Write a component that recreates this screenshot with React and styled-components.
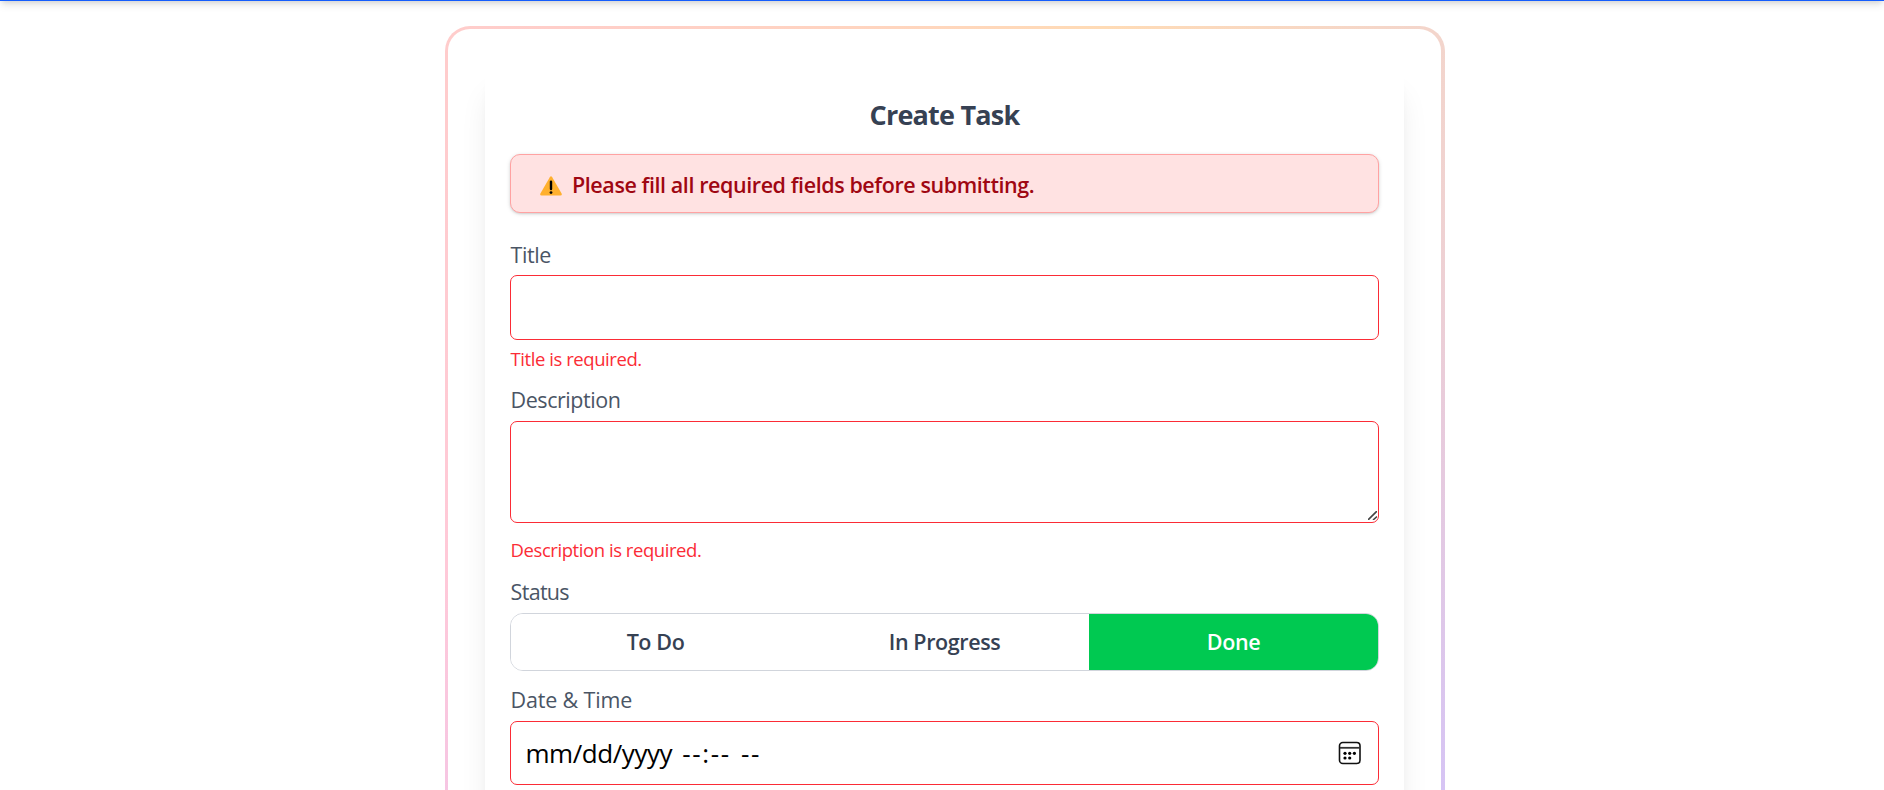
import React from "react";
import styled, { createGlobalStyle } from "styled-components";

const Global = createGlobalStyle`
  * { box-sizing: border-box; }
  body { margin: 0; background: #fff; overflow: hidden; font-family: "Open Sans", "Noto Sans", sans-serif; }
`;

const Page = styled.div`
  height: 790px;
  overflow: hidden;
`;
const TopBar = styled.div`
  height: 80px;
  margin-top: -79px;
  background: #155dfc;
  box-shadow: 0 5px 8px -1px rgba(0, 0, 0, 0.1), 0 3px 5px -2px rgba(0, 0, 0, 0.1);
`;
const Frame = styled.div`
  width: 1000px;
  height: 1160px;
  margin: 25px 0 0 445px;
  padding: 3px 4px 3px 3px;
  border-radius: 25px;
  background: conic-gradient(from 0deg at 66% 50%, #ffdbb5, #f3d5cc 8.5%, #e8cbdc 17%, #d6c4f4 33%, #d6c4f4 50%, #f5c5e4 70%, #ffc9d8 76%, #ffcccc 86%, #ffdbb5);
`;
const Surface = styled.div`
  height: 100%;
  padding: 37px;
  border-radius: 22px;
  background: #fff;
`;
const Panel = styled.form`
  height: 1080px;
  padding: 25px;
  border-radius: 15px;
  background: #fff;
  box-shadow: 0 25px 31px -6px rgba(0, 0, 0, 0.1), 0 10px 12px -7px rgba(0, 0, 0, 0.1);
`;
const Heading = styled.h2`
  height: 45px;
  margin: 1px 0 17px;
  font-size: 27px;
  line-height: 45px;
  font-weight: 700;
  letter-spacing: -0.78px;
  text-align: center;
  color: #364153;
`;
const Alert = styled.div`
  display: flex;
  align-items: center;
  gap: 10px;
  height: 59px;
  padding: 2px 30px 0 29px;
  border: 1px solid #ffa2a2;
  border-radius: 10px;
  background: #ffe2e2;
  box-shadow: 0 1px 4px rgba(0, 0, 0, 0.13), 0 1px 2px rgba(0, 0, 0, 0.1);
  color: #9f0712;
  font-size: 21.5px;
  line-height: 30px;
  font-weight: 600;
  letter-spacing: -0.42px;

  svg { margin-top: 2px; }
`;
const Label = styled.label`
  display: block;
  height: 31px;
  line-height: 31px;
  margin: ${(p) => p.$gap}px 0 ${(p) => p.$below ?? 5}px;
  padding-left: 0.6px;
  font-size: 21.5px;
  letter-spacing: ${(p) => p.$track ?? -0.45}px;
  color: #4a5565;
`;
const Field = styled.div`
  display: flex;
  align-items: ${(p) => (p.$area ? "flex-end" : "center")};
  height: ${(p) => p.$height}px;
  padding: ${(p) => (p.$area ? "0 1px 2px" : "0 16px 0 14.5px")};
  justify-content: ${(p) => (p.$area ? "flex-end" : "space-between")};
  border: 1px solid #fb2c36;
  border-radius: 7px;
`;
const ErrorText = styled.p`
  height: 25px;
  margin: ${(p) => p.$gap}px 0 0;
  padding-left: 0.6px;
  font-size: 18.5px;
  line-height: 23px;
  letter-spacing: -0.44px;
  color: #fb2c36;
`;
const Segments = styled.div`
  display: grid;
  grid-template-columns: repeat(3, 1fr);
  height: 58px;
  overflow: hidden;
  border: 1px solid #d1d5dc;
  border-radius: 13px;
`;
const Segment = styled.button`
  border: 0;
  padding: 0 0 1px;
  font: 600 21.5px "Open Sans", "Noto Sans", sans-serif;
  letter-spacing: -0.4px;
  background: ${(p) => (p.$active ? "#00c951" : "#fff")};
  color: ${(p) => (p.$active ? "#fff" : "#364153")};
`;
const DateText = styled.div`
  display: flex;
  font-size: 26px;
  line-height: 36px;
  letter-spacing: -0.45px;
  color: #000;
`;
const Dashes = styled.span`
  margin-left: 10px;
  letter-spacing: 1.7px;
`;

const Warning = () => (
  <svg width="22" height="20" viewBox="0 0 22 20">
    <path d="M9.8 1.2Q11-.6 12.2 1.2L21.6 17.6Q22.4 19.6 20.4 19.6H1.6Q-.4 19.6.4 17.6Z" fill="#ffb02e" />
    <path d="M11 5.8V13" stroke="#000" strokeWidth="2.4" strokeLinecap="round" />
    <circle cx="11" cy="16.6" r="1.4" />
  </svg>
);
const Resizer = () => (
  <svg width="9" height="9" viewBox="0 0 9 9" stroke="#444" strokeWidth="1.6">
    <path d="M0 9L9 0M5 9L9 5.5" />
  </svg>
);
const Calendar = () => (
  <svg width="24" height="24" viewBox="0 0 24 24">
    <rect x="1.5" y="1.5" width="20.5" height="21" rx="3.3" fill="none" stroke="#111" strokeWidth="1.6" />
    <path d="M2 6.8H22" stroke="#333" strokeWidth="1.8" />
    {[[7, 12.3], [11.7, 12.3], [16.4, 12.3], [7, 17], [11.7, 17]].map(([x, y]) => (
      <circle key={`${x}-${y}`} cx={x} cy={y} r="1.6" />
    ))}
  </svg>
);

export default function App() {
  return (
    <Page>
      <Global />
      <TopBar />
      <Frame>
        <Surface>
          <Panel>
            <Heading>Create Task</Heading>
            <Alert>
              <Warning />
              <span>Please fill all required fields before submitting.</span>
            </Alert>
            <Label $gap={26}>Title</Label>
            <Field $height={65} />
            <ErrorText $gap={7}>Title is required.</ErrorText>
            <Label $gap={12} $below={6}>Description</Label>
            <Field $height={102} $area>
              <Resizer />
            </Field>
            <ErrorText $gap={15}>Description is required.</ErrorText>
            <Label $gap={13} $below={6} $track={-0.7}>Status</Label>
            <Segments>
              <Segment type="button">To Do</Segment>
              <Segment type="button">In Progress</Segment>
              <Segment type="button" $active>Done</Segment>
            </Segments>
            <Label $gap={13} $below={6} $track={-0.17}>Date &amp; Time</Label>
            <Field $height={64}>
              <DateText>
                <span>mm/dd/yyyy</span>
                <Dashes>--:--</Dashes>
                <Dashes>--</Dashes>
              </DateText>
              <Calendar />
            </Field>
          </Panel>
        </Surface>
      </Frame>
    </Page>
  );
}
